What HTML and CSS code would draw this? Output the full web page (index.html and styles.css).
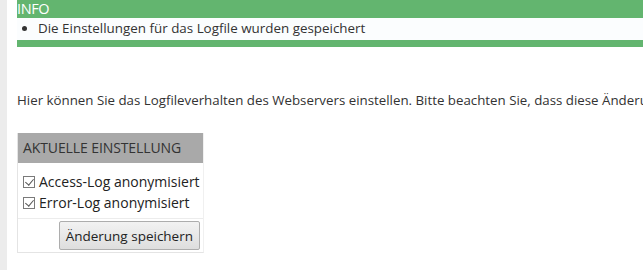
FILE: index.html
```html
<!DOCTYPE html>
<html lang="de">
<head>
    <meta charset="UTF-8">
    <title>Logfile</title>
    <link rel="stylesheet" href="styles.css">
</head>
<body>
    <div class="page">
        <div class="sidebar"></div>
        <div class="content">
            <div class="info">
                <div class="info-title">INFO</div>
                <ul class="info-list">
                    <li>Die Einstellungen für das Logfile wurden gespeichert</li>
                </ul>
            </div>

            <p class="intro">Hier können Sie das Logfileverhalten des Webservers einstellen. Bitte beachten Sie, dass diese Änderungen erst nach einem Neustart wirksam werden.</p>

            <form class="settings">
                <div class="settings-title">AKTUELLE EINSTELLUNG</div>
                <div class="settings-body">
                    <label><input type="checkbox" checked> Access-Log anonymisiert</label>
                    <label><input type="checkbox" checked> Error-Log anonymisiert</label>
                </div>
                <div class="settings-footer">
                    <button type="button">Änderung speichern</button>
                </div>
            </form>
        </div>
    </div>
</body>
</html>
```

FILE: styles.css
```css
body {
    margin: 0;
    font-family: "Open Sans", Arial, sans-serif;
    color: #333;
    background: #fff;
    overflow: hidden;
}
.page {
    display: flex;
    min-height: 270px;
}
.sidebar {
    width: 7px;
    background-color: #ececec;
    flex-shrink: 0;
}
.content {
    flex: 1;
    padding-left: 10px;
    min-width: 0;
    overflow: hidden;
}
.info {
    background-color: #63b56f;
    padding-bottom: 7px;
}
.info-title {
    color: #fff;
    font-size: 14.5px;
    height: 18px;
    line-height: 18px;
    letter-spacing: -0.4px;
}
.info-list {
    margin: 0;
    padding: 2px 0 3px 21px;
    background-color: #fbfdfe;
    font-size: 13.4px;
    line-height: 17px;
    color: #333;
}
.intro {
    margin: 44px 0 0 0;
    font-size: 13.3px;
    white-space: nowrap;
    overflow: hidden;
}
.settings {
    margin-top: 24px;
    width: 185px;
    border-left: 1px solid #e4e4e4;
    border-bottom: 1px solid #e4e4e4;
    border-right: 1px solid #f0f0f0;
}
.settings-title {
    background-color: #a9a9a9;
    height: 30px;
    line-height: 30px;
    padding-left: 5px;
    font-size: 14px;
    color: #333;
    letter-spacing: -0.1px;
}
.settings-body {
    display: flex;
    flex-direction: column;
    padding: 8px 0 5px 5px;
    border-bottom: 1px solid #ececec;
}
.settings-body label {
    font-size: 14px;
    line-height: 21px;
    display: flex;
    align-items: center;
    color: #222;
}
.settings-body input {
    appearance: none;
    margin: 0 4px 0 0;
    width: 12px;
    height: 12px;
    border: 1px solid #7a7a7a;
    background: #fff;
    position: relative;
}
.settings-body input:checked::after {
    content: "";
    position: absolute;
    left: 3px;
    top: 0px;
    width: 4px;
    height: 7px;
    border-right: 1px solid #555;
    border-bottom: 1px solid #555;
    transform: rotate(40deg);
}
.settings-footer {
    display: flex;
    justify-content: flex-end;
    padding: 2px 3px 2px 0;
}
.settings-footer button {
    font-family: "Open Sans", Arial, sans-serif;
    font-size: 13.5px;
    color: #222;
    height: 29px;
    padding: 0 6px;
    background: linear-gradient(#f2f2f2, #dedede);
    border: 1px solid #adadad;
    border-radius: 2px;
}
```
